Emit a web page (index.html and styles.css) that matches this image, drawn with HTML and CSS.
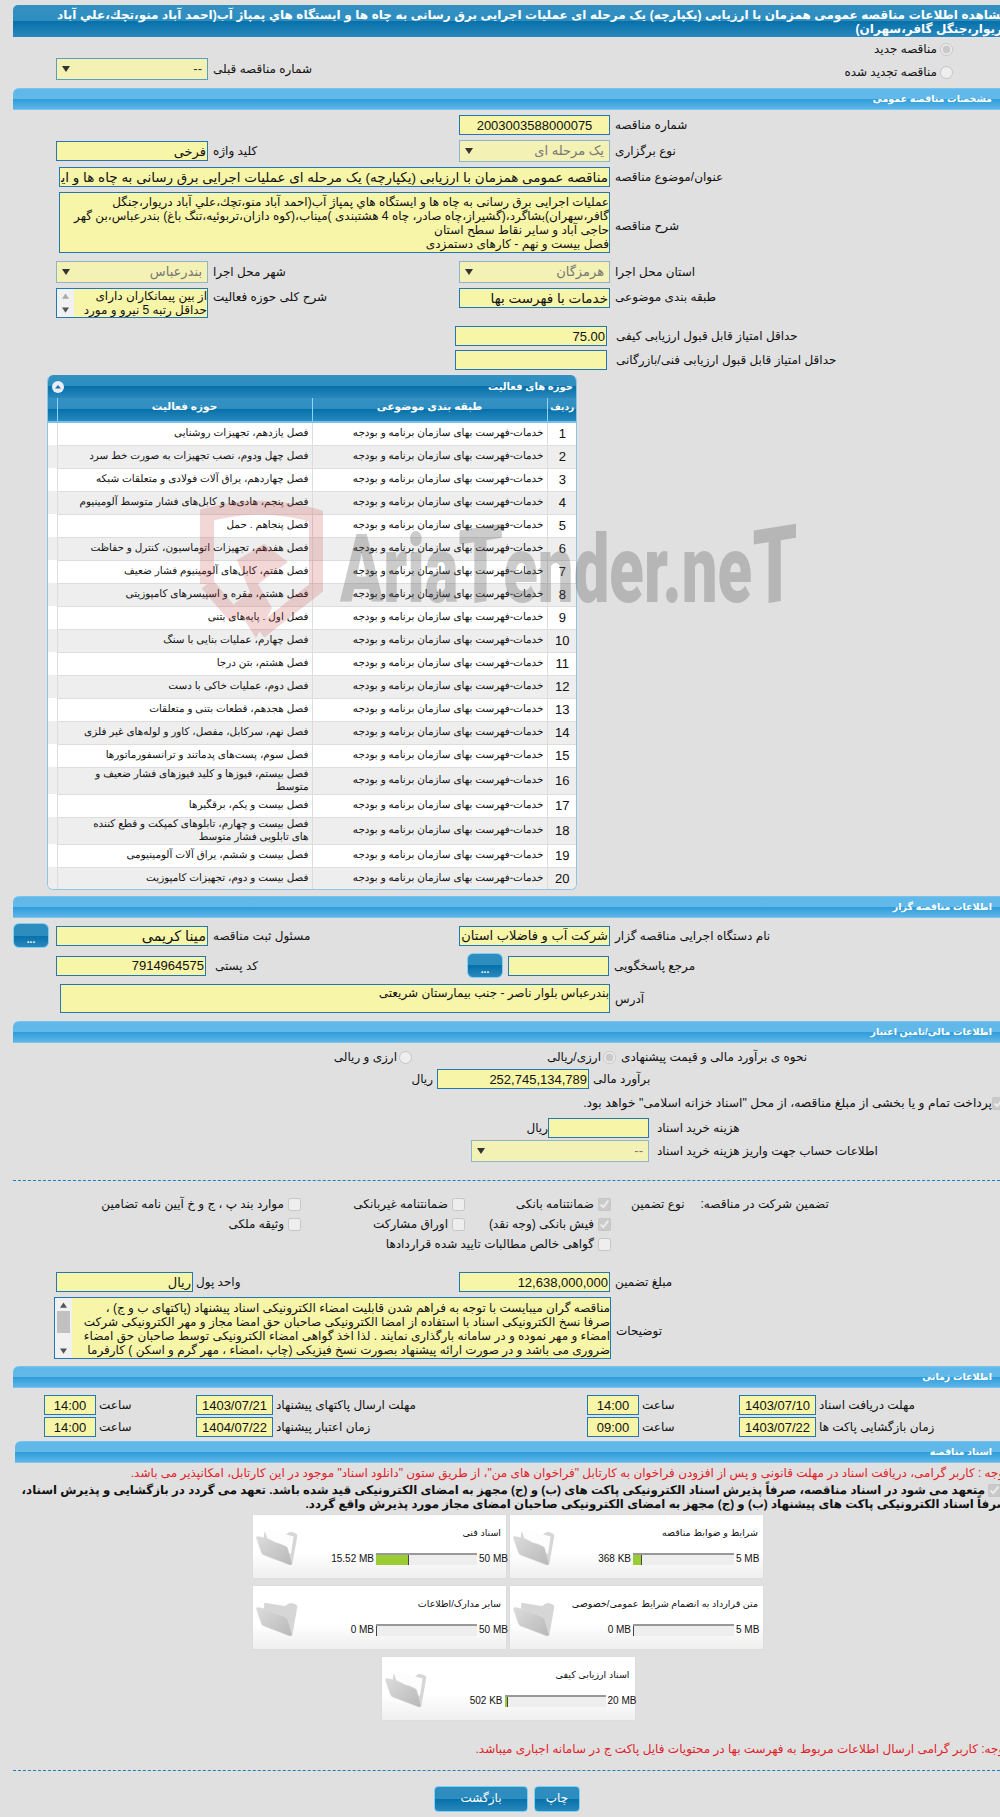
FILE: index.html
```html
<!DOCTYPE html>
<html lang="fa">
<head>
<meta charset="utf-8">
<title>مشاهده اطلاعات مناقصه</title>
<link rel="stylesheet" href="styles.css">
</head>
<body>
<div class="page">
  <h1 class="hdr"><span class="bleed">مشاهده اطلاعات مناقصه عمومی همزمان با ارزیابی (یکپارچه) یک مرحله ای عملیات اجرایی برق رسانی به چاه ها و ایستگاه هاي پمپاژ آب(احمد آباد منو،تچك،علي آباد</span><span class="bleed">دریوار،جنگل گافر،سهران)</span></h1>

  <div class="top-radios">
    <label class="rad-line"><input type="radio" disabled checked><span>مناقصه جدید</span></label>
    <div class="row-prev">
      <div class="cell"><div class="sel prev"><svg class="arr" viewBox="0 0 8 6"><path d="M0 0h8L4 6z"/></svg><span>--</span></div><span class="lbl">شماره مناقصه قبلی</span></div>
      <label class="rad-line rad-end"><input type="radio" disabled><span>مناقصه تجدید شده</span></label>
    </div>
  </div>

  <h2 class="sec">مشخصات مناقصه عمومی</h2>
  <div class="row r1"><div class="cell"></div><div class="cell"><input class="fld w151 ltr-c" readonly value="2003003588000075"><span class="lbl">شماره مناقصه</span></div></div>
  <div class="row r22"><div class="cell in43"><input class="fld big w152" readonly value="فرخی"><span class="lbl">کلید واژه</span></div><div class="cell"><div class="sel w151"><svg class="arr" viewBox="0 0 8 6"><path d="M0 0h8L4 6z"/></svg><span>یک مرحله ای</span></div><span class="lbl">نوع برگزاری</span></div></div>
  <div class="wide r3"><input class="fld xl w551" readonly value="مناقصه عمومی همزمان با ارزیابی (یکپارچه) یک مرحله ای عملیات اجرایی برق رسانی به چاه ها و ایستگاه هاي پمپاژ آب(احمد آباد منو،تچك،علي آباد دریوار،جنگل گافر،سهران)"><span class="lbl">عنوان/موضوع مناقصه</span></div>
  <div class="wide r4"><div class="ta w551 h61">عملیات اجرایی برق رسانی به چاه ها و ایستگاه هاي پمپاژ آب(احمد آباد منو،تچك،علي آباد دریوار،جنگل<br>گافر،سهران)بشاگرد،(گشیراز،چاه صادر، چاه 4 هشتبندی )میناب،(کوه دازان،تربوئیه،تنگ باغ) بندرعباس،بن گهر<br>حاجی آباد و سایر نقاط سطح استان<br>فصل بیست و نهم - کارهای دستمزدی</div><span class="lbl lbl-low">شرح مناقصه</span></div>
  <div class="row r22 r5"><div class="cell in43"><div class="sel w152"><svg class="arr" viewBox="0 0 8 6"><path d="M0 0h8L4 6z"/></svg><span>بندرعباس</span></div><span class="lbl">شهر محل اجرا</span></div><div class="cell"><div class="sel w151"><svg class="arr" viewBox="0 0 8 6"><path d="M0 0h8L4 6z"/></svg><span>هرمزگان</span></div><span class="lbl">استان محل اجرا</span></div></div>
  <div class="row r6"><div class="cell in43 top"><div class="list"><div class="sb sb-s"><svg viewBox="0 0 8 6"><path d="M4 0l4 6H0z"/></svg><svg viewBox="0 0 8 6"><path d="M0 0h8L4 6z"/></svg></div><div class="list-t">از بین پیمانکاران دارای<br>حداقل رتبه 5 نیرو و مورد</div></div><span class="lbl lbl-top">شرح کلی حوزه فعالیت</span></div><div class="cell top"><input class="fld xl w151" readonly value="خدمات با فهرست بها"><span class="lbl lbl-top">طبقه بندی موضوعی</span></div></div>
  <div class="score r7"><input class="fld w152 num" readonly value="75.00"><span class="lbl">حداقل امتیاز قابل قبول ارزیابی کیفی</span></div>
  <div class="score r8"><input class="fld w152" readonly value=""><span class="lbl">حداقل امتیاز قابل قبول ارزیابی فنی/بازرگانی</span></div>

  <section class="panel">
    <h3 class="panel-t"><span>حوزه های فعالیت</span><svg class="collapse" viewBox="0 0 12 12"><circle cx="6" cy="6" r="6" fill="#e8eef5"/><path d="M3 7.500L6 4l3 3.500z" fill="#1f6fa8"/></svg></h3>
    <table class="tbl">
      <thead><tr><th class="c-n">ردیف</th><th class="c-c">طبقه بندی موضوعی</th><th class="c-a">حوزه فعالیت</th><th class="c-e"></th></tr></thead>
      <tbody>
        <tr><td class="n">1</td><td>خدمات-فهرست بهای سازمان برنامه و بودجه</td><td>فصل یازدهم، تجهیزات روشنایی</td><td class="e"></td></tr>
        <tr><td class="n">2</td><td>خدمات-فهرست بهای سازمان برنامه و بودجه</td><td>فصل چهل ودوم، نصب تجهیزات به صورت خط سرد</td><td class="e"></td></tr>
        <tr><td class="n">3</td><td>خدمات-فهرست بهای سازمان برنامه و بودجه</td><td>فصل چهاردهم، یراق آلات فولادی و متعلقات شبکه</td><td class="e"></td></tr>
        <tr><td class="n">4</td><td>خدمات-فهرست بهای سازمان برنامه و بودجه</td><td>فصل پنجم، هادی‌ها و کابل‌های فشار متوسط آلومینیوم</td><td class="e"></td></tr>
        <tr><td class="n">5</td><td>خدمات-فهرست بهای سازمان برنامه و بودجه</td><td>فصل پنجاهم . حمل</td><td class="e"></td></tr>
        <tr><td class="n">6</td><td>خدمات-فهرست بهای سازمان برنامه و بودجه</td><td>فصل هفدهم، تجهیزات اتوماسیون، کنترل و حفاظت</td><td class="e"></td></tr>
        <tr><td class="n">7</td><td>خدمات-فهرست بهای سازمان برنامه و بودجه</td><td>فصل هفتم، کابل‌های آلومینیوم فشار ضعیف</td><td class="e"></td></tr>
        <tr><td class="n">8</td><td>خدمات-فهرست بهای سازمان برنامه و بودجه</td><td>فصل هشتم، مقره و اسپیسرهای کامپوزیتی</td><td class="e"></td></tr>
        <tr><td class="n">9</td><td>خدمات-فهرست بهای سازمان برنامه و بودجه</td><td>فصل اول . پایه‌های بتنی</td><td class="e"></td></tr>
        <tr><td class="n">10</td><td>خدمات-فهرست بهای سازمان برنامه و بودجه</td><td>فصل چهارم، عملیات بنایی با سنگ</td><td class="e"></td></tr>
        <tr><td class="n">11</td><td>خدمات-فهرست بهای سازمان برنامه و بودجه</td><td>فصل هشتم، بتن درجا</td><td class="e"></td></tr>
        <tr><td class="n">12</td><td>خدمات-فهرست بهای سازمان برنامه و بودجه</td><td>فصل دوم، عملیات خاکی با دست</td><td class="e"></td></tr>
        <tr><td class="n">13</td><td>خدمات-فهرست بهای سازمان برنامه و بودجه</td><td>فصل هجدهم، قطعات بتنی و متعلقات</td><td class="e"></td></tr>
        <tr><td class="n">14</td><td>خدمات-فهرست بهای سازمان برنامه و بودجه</td><td>فصل نهم، سرکابل، مفصل، کاور و لوله‌های غیر فلزی</td><td class="e"></td></tr>
        <tr><td class="n">15</td><td>خدمات-فهرست بهای سازمان برنامه و بودجه</td><td>فصل سوم، پست‌های پدماتند و ترانسفورماتورها</td><td class="e"></td></tr>
        <tr><td class="n">16</td><td>خدمات-فهرست بهای سازمان برنامه و بودجه</td><td class="two">فصل بیستم، فیوزها و کلید فیوزهای فشار ضعیف و<br>متوسط</td><td class="e"></td></tr>
        <tr><td class="n">17</td><td>خدمات-فهرست بهای سازمان برنامه و بودجه</td><td>فصل بیست و یکم، برقگیرها</td><td class="e"></td></tr>
        <tr><td class="n">18</td><td>خدمات-فهرست بهای سازمان برنامه و بودجه</td><td class="two">فصل بیست و چهارم، تابلوهای کمپکت و قطع کننده<br>های تابلویی فشار متوسط</td><td class="e"></td></tr>
        <tr><td class="n">19</td><td>خدمات-فهرست بهای سازمان برنامه و بودجه</td><td>فصل بیست و ششم، یراق آلات آلومینیومی</td><td class="e"></td></tr>
        <tr><td class="n">20</td><td>خدمات-فهرست بهای سازمان برنامه و بودجه</td><td>فصل بیست و دوم، تجهیزات کامپوزیت</td><td class="e"></td></tr>
      </tbody>
    </table>
  </section>

  <h2 class="sec s-org">اطلاعات مناقصه گزار</h2>
  <div class="row r-org"><div class="cell"><button class="btn-dots">...</button><input class="fld xxl w152" readonly value="مینا کریمی"><span class="lbl">مسئول ثبت مناقصه</span></div><div class="cell"><input class="fld big w151" readonly value="شرکت آب و فاضلاب استان"><span class="lbl">نام دستگاه اجرایی مناقصه گزار</span></div></div>
  <div class="row r-ref"><div class="cell in43 postal"><input class="fld w150 num" readonly value="7914964575"><span class="lbl">کد پستی</span></div><div class="cell ref"><button class="btn-dots">...</button><input class="fld w101" readonly value=""><span class="lbl">مرجع پاسخگویی</span></div></div>
  <div class="wide r-addr"><div class="ta w550 h29">بندرعباس بلوار ناصر - جنب بیمارستان شریعتی</div><span class="lbl">آدرس</span></div>

  <h2 class="sec s-fin">اطلاعات مالی/تامین اعتبار</h2>
  <div class="cur-row">
    <label class="cur cur-a"><span>ارزی و ریالی</span><input type="radio" disabled></label>
    <label class="cur cur-b"><span>ارزی/ریالی</span><input type="radio" disabled checked></label>
    <span class="lbl">نحوه ی برآورد مالی و قیمت پیشنهادی</span>
  </div>
  <div class="est-row"><span class="lbl unit">ریال</span><input class="fld w152 num" readonly value="252,745,134,789"><span class="lbl">برآورد مالی</span></div>
  <label class="treasury"><input type="checkbox" disabled checked><span>پرداخت تمام و یا بخشی از مبلغ مناقصه، از محل "اسناد خزانه اسلامی" خواهد بود.</span></label>
  <div class="buy-row"><span class="lbl unit">ریال</span><input class="fld w101" readonly value=""><span class="lbl">هزینه خرید اسناد</span></div>
  <div class="acc-row"><div class="sel w178"><svg class="arr" viewBox="0 0 8 6"><path d="M0 0h8L4 6z"/></svg><span>--</span></div><span class="lbl">اطلاعات حساب جهت واریز هزینه خرید اسناد</span></div>
  <div class="dash d1"></div>

  <div class="g-row g1">
    <label class="chk"><input type="checkbox" disabled><span>موارد بند پ ، ج و خ آیین نامه تضامین</span></label>
    <label class="chk"><input type="checkbox" disabled><span>ضمانتنامه غیربانکی</span></label>
    <label class="chk"><input type="checkbox" disabled checked><span>ضمانتنامه بانکی</span></label>
    <div class="g-lbl"><span class="lbl">نوع تضمین</span><span class="lbl">تضمین شرکت در مناقصه:</span></div>
  </div>
  <div class="g-row">
    <label class="chk"><input type="checkbox" disabled><span>وثیقه ملکی</span></label>
    <label class="chk"><input type="checkbox" disabled><span>اوراق مشارکت</span></label>
    <label class="chk"><input type="checkbox" disabled checked><span>فیش بانکی (وجه نقد)</span></label>
  </div>
  <div class="g-row">
    <span></span>
    <label class="chk chk-long"><input type="checkbox" disabled><span>گواهی خالص مطالبات تایید شده قراردادها</span></label>
  </div>

  <div class="row r-amt"><div class="cell in43"><input class="fld big w137" readonly value="ریال"><span class="lbl">واحد پول</span></div><div class="cell"><input class="fld w151 num" readonly value="12,638,000,000"><span class="lbl">مبلغ تضمین</span></div></div>
  <div class="wide r-notes">
    <div class="ta-s">
      <div class="sb"><svg viewBox="0 0 8 6"><path d="M4 0l4 6H0z"/></svg><i></i><svg viewBox="0 0 8 6"><path d="M0 0h8L4 6z"/></svg></div>
      <div class="ta-t">مناقصه گران میبایست با توجه به فراهم شدن قابلیت امضاء الکترونیکی اسناد پیشنهاد (پاکتهای ب و ج) ،<br>صرفا نسخ الکترونیکی اسناد با استفاده از امضا الکترونیکی صاحبان حق امضا مجاز و مهر الکترونیکی شرکت<br>امضاء و مهر نموده و در سامانه بارگذاری نمایند . لذا اخذ گواهی امضاء الکترونیکی توسط صاحبان حق امضاء<br>ضروری می باشد و در صورت ارائه پیشنهاد بصورت نسخ فیزیکی (چاپ ،امضاء ، مهر گرم و اسکن ) کارفرما</div>
    </div>
    <span class="lbl lbl-low">توضیحات</span>
  </div>

  <h2 class="sec s-time">اطلاعات زمانی</h2>
  <div class="t-grid">
    <div class="cell"><input class="fld w52 ctr" readonly value="14:00"><span class="lbl">ساعت</span></div>
    <div class="cell"><input class="fld w77 ctr" readonly value="1403/07/21"><span class="lbl">مهلت ارسال پاکتهای پیشنهاد</span></div>
    <div class="cell"><input class="fld w52 ctr" readonly value="14:00"><span class="lbl">ساعت</span></div>
    <div class="cell"><input class="fld w77 ctr" readonly value="1403/07/10"><span class="lbl">مهلت دریافت اسناد</span></div>
    <div class="cell"><input class="fld w52 ctr" readonly value="14:00"><span class="lbl">ساعت</span></div>
    <div class="cell"><input class="fld w77 ctr" readonly value="1404/07/22"><span class="lbl">زمان اعتبار پیشنهاد</span></div>
    <div class="cell"><input class="fld w52 ctr" readonly value="09:00"><span class="lbl">ساعت</span></div>
    <div class="cell"><input class="fld w77 ctr" readonly value="1403/07/22"><span class="lbl">زمان بازگشایی پاکت ها</span></div>
  </div>

  <h2 class="sec s-docs">اسناد مناقصه</h2>
  <p class="red bleed-p">توجه : کاربر گرامی، دریافت اسناد در مهلت قانونی و پس از افزودن فراخوان به کارتابل "فراخوان های من"، از طریق ستون "دانلود اسناد" موجود در این کارتابل، امکانپذیر می باشد.</p>
  <div class="pledge"><input type="checkbox" disabled checked><p>متعهد می شود در اسناد مناقصه، صرفاً پذیرش اسناد الکترونیکی پاکت های (ب) و (ج) مجهز به امضای الکترونیکی قید شده باشد. تعهد می گردد در بازگشایی و پذیرش اسناد،</p></div>
  <p class="pledge2 bleed-p">صرفاً اسناد الکترونیکی پاکت های پیشنهاد (ب) و (ج) مجهز به امضای الکترونیکی صاحبان امضای مجاز مورد پذیرش واقع گردد.</p>

  <div class="cards">
    <article class="card"><svg class="folder" viewBox="0 0 125 110"><defs><linearGradient id="ff" x1="0" y1="0" x2="1" y2="1"><stop offset="0" stop-color="#dcdcdc"/><stop offset="1" stop-color="#b8b8b8"/></linearGradient></defs><path class="f-b" d="M25 8L85 18Q92 16 96 11Q106 6 120 14Q125 18 122 26L108 104Q104 109 98 105L20 70Z"/><path class="f-p" d="M26 6Q33 0 42 3L112 22L104 74L35 32Z"/><path class="f-f" d="M1 27Q0 21 8 22Q35 25 58 40Q88 48 94 56L107 102Q107 110 98 106L22 77Q17 75 15 68Z"/></svg><div class="c-body"><div class="c-title">شرایط و ضوابط مناقصه</div><div class="c-bar"><span class="c-used">368 KB</span><div class="bar"><i class="p7"></i></div><span class="c-max">5 MB</span></div></div></article>
    <article class="card"><svg class="folder" viewBox="0 0 125 110"><path class="f-b" d="M25 8L85 18Q92 16 96 11Q106 6 120 14Q125 18 122 26L108 104Q104 109 98 105L20 70Z"/><path class="f-p" d="M26 6Q33 0 42 3L112 22L104 74L35 32Z"/><path class="f-f" d="M1 27Q0 21 8 22Q35 25 58 40Q88 48 94 56L107 102Q107 110 98 106L22 77Q17 75 15 68Z"/></svg><div class="c-body"><div class="c-title">اسناد فنی</div><div class="c-bar"><span class="c-used">15.52 MB</span><div class="bar"><i class="p33"></i></div><span class="c-max">50 MB</span></div></div></article>
    <article class="card"><svg class="folder" viewBox="0 0 125 110"><path class="f-b" d="M25 8L85 18Q92 16 96 11Q106 6 120 14Q125 18 122 26L108 104Q104 109 98 105L20 70Z"/><path class="f-f" d="M1 27Q0 21 8 22Q35 25 58 40Q88 48 94 56L107 102Q107 110 98 106L22 77Q17 75 15 68Z"/></svg><div class="c-body"><div class="c-title">متن قرارداد به انضمام شرایط عمومی/خصوصی</div><div class="c-bar"><span class="c-used">0 MB</span><div class="bar"><i class="p0"></i></div><span class="c-max">5 MB</span></div></div></article>
    <article class="card"><svg class="folder" viewBox="0 0 125 110"><path class="f-b" d="M25 8L85 18Q92 16 96 11Q106 6 120 14Q125 18 122 26L108 104Q104 109 98 105L20 70Z"/><path class="f-f" d="M1 27Q0 21 8 22Q35 25 58 40Q88 48 94 56L107 102Q107 110 98 106L22 77Q17 75 15 68Z"/></svg><div class="c-body"><div class="c-title">سایر مدارک/اطلاعات</div><div class="c-bar"><span class="c-used">0 MB</span><div class="bar"><i class="p0"></i></div><span class="c-max">50 MB</span></div></div></article>
    <article class="card"><svg class="folder" viewBox="0 0 125 110"><path class="f-b" d="M25 8L85 18Q92 16 96 11Q106 6 120 14Q125 18 122 26L108 104Q104 109 98 105L20 70Z"/><path class="f-p" d="M26 6Q33 0 42 3L112 22L104 74L35 32Z"/><path class="f-f" d="M1 27Q0 21 8 22Q35 25 58 40Q88 48 94 56L107 102Q107 110 98 106L22 77Q17 75 15 68Z"/></svg><div class="c-body"><div class="c-title">اسناد ارزیابی کیفی</div><div class="c-bar"><span class="c-used">502 KB</span><div class="bar"><i class="p3"></i></div><span class="c-max">20 MB</span></div></div></article>
  </div>

  <p class="red note bleed-p">توجه: کاربر گرامی ارسال اطلاعات مربوط به فهرست بها در محتویات فایل پاکت ج در سامانه اجباری میباشد.</p>
  <div class="dash d2"></div>
  <div class="actions"><button class="btn b-back">بازگشت</button><button class="btn b-print">چاپ</button></div>
</div>

<div class="wm" aria-hidden="true">
  <svg class="wm-shield" viewBox="0 0 124 140"><path d="M7 84V15Q62 0 116 16V88L60 132" fill="none" stroke="#c83c3c" stroke-width="14"/><path d="M7 84L36 118" fill="none" stroke="#c83c3c" stroke-width="14"/><path d="M37 60L64 44L88 62L58 84L72 108L56 138L34 104L50 92Z" fill="#c83c3c"/></svg>
  <span class="wm-text">Aria<b>T</b>ender.ne<b>T</b></span>
</div>
</body>
</html>
```
FILE: styles.css
```css
* { box-sizing: border-box; }
html, body { margin: 0; padding: 0; height: 1817px; overflow: hidden; }
body { background: #e0e0e0; color: #111; font: 12px/14px "Liberation Sans", "DejaVu Sans", sans-serif; position: relative; }
p, h1, h2, h3 { margin: 0; }
.page { margin-left: 13px; width: 987px; padding-top: 5px; }

.hdr { height: 32px; padding: 3px 0 0; color: #fff; font-size: 12px; line-height: 14px; font-weight: bold; word-spacing: .25px; border-radius: 5px 0 0 0; direction: rtl; overflow: hidden; background: linear-gradient(#3391c2 0, #2e8dbf 50%, #0670aa 50%, #2a88bd 100%); }
.bleed { display: block; margin-right: -8px; white-space: nowrap; }

.top-radios { height: 51px; padding-top: 5px; }
.rad-line { display: flex; direction: rtl; align-items: center; gap: 3px; height: 14px; margin-right: 47px; }
input[type=radio], input[type=checkbox] { margin: 0; width: 13px; height: 13px; flex: none; }
.row-prev { margin-top: 2px; height: 22px; display: flex; justify-content: space-between; padding-left: 43px; }
.rad-end { margin-top: 7px; }

.sec { height: 22px; padding: 4px 8px 0 0; color: #fff; font-size: 9.500px; line-height: 14px; font-weight: bold; direction: rtl; border-radius: 6px 0 0 0; background: linear-gradient(#7cc8f0 0, #5fb8e9 8%, #62b9e9 50%, #2e9cd9 50%, #5db6e8 95%, #8fd3f5 100%); }

.row { display: grid; grid-template-columns: 446px 1fr; }
.cell { display: flex; align-items: center; gap: 5px; }
.in43 { padding-left: 43px; }
.top { align-items: flex-start; }
.lbl { white-space: nowrap; direction: rtl; font-size: 12px; }
.lbl-low { margin-top: 6px; }
.fld { display: block; height: 20px; padding: 0 1px; border: 1px solid #2277b4; background: #f7f5a8; color: #111; font: 12px/18px "Liberation Sans", "DejaVu Sans", sans-serif; direction: rtl; text-align: right; outline: none; flex: none; border-radius: 0; }
.big { font-size: 13px; }
.xl { font-size: 13.500px; }
.xxl { font-size: 14.500px; }
.num { font-size: 13px; }
.ltr-c { text-align: center; font-size: 13px; }
.ctr { text-align: center; font-size: 13px; }
.sel { display: flex; justify-content: space-between; align-items: center; height: 22px; padding: 0 5px; border: 1px solid #8fb6c8; background: #f3f1b4; color: #777; direction: ltr; flex: none; font-size: 13px; }
.sel span { direction: rtl; }
.arr { width: 8px; height: 6px; fill: #333; }
.prev { width: 152px; color: #333; border-color: #5e9cc0; }
.w52 { width: 52px; } .w77 { width: 77px; } .w101 { width: 101px; } .w137 { width: 137px; } .w150 { width: 150px; } .w151 { width: 151px; } .w152 { width: 152px; } .w178 { width: 178px; } .w550 { width: 550px; } .w551 { width: 551px; }

.r1 { margin-top: 5px; height: 20px; }
.r22 { margin-top: 5px; height: 22px; }
.wide { display: flex; gap: 5px; align-items: center; }
.r3 { margin: 5px 0 0 46px; height: 20px; }
.r4 { margin: 5px 0 0 46px; height: 61px; }
.ta { padding: 2px 0 0 1px; border: 1px solid #2277b4; background: #f7f5a8; font-size: 12px; line-height: 14px; direction: rtl; flex: none; overflow: hidden; white-space: nowrap; }
.h61 { height: 61px; }
.h29 { height: 29px; padding-top: 1px; }
.r5 { margin-top: 8px; }
.r6 { margin-top: 5px; height: 30px; }
.lbl-top { margin-top: 2px; }
.list { display: flex; width: 152px; height: 30px; flex: none; border: 1px solid #2277b4; background: #f7f5a8; overflow: hidden; }
.list-t { flex: 1; direction: rtl; white-space: nowrap; overflow: hidden; padding-top: 1px; font-size: 12px; line-height: 13.500px; }
.sb { display: flex; flex-direction: column; justify-content: space-between; align-items: center; width: 17px; flex: none; background: #f1f1f1; padding: 4px 0; }
.sb svg { width: 7px; height: 6px; fill: #555; }
.sb-s svg:first-child { fill: #aaa; }
.sb i { display: block; width: 13px; height: 22px; background: #c1c1c1; margin: 3px 0 auto; }
.score { display: flex; gap: 9px; align-items: center; height: 20px; margin-left: 442px; }
.r7 { margin-top: 8px; }
.r8 { margin-top: 4px; }

.panel { margin: 5px 0 0 34px; width: 530px; height: 515px; border: solid #8fc6e6; border-width: 0 1px 1px; border-radius: 6px; background: #fff; overflow: hidden; direction: rtl; }
.panel-t { display: flex; justify-content: space-between; align-items: center; height: 23px; padding: 0 3px 0 4px; color: #fff; font-size: 10px; font-weight: bold; background: linear-gradient(#3391c2 0, #2e8dbf 50%, #0670aa 50%, #2a88bd 100%); }
.collapse { width: 12px; height: 12px; }
.tbl { width: 530px; border-collapse: collapse; table-layout: fixed; font-size: 10.400px; line-height: 13px; margin-right: -1px; text-rendering: geometricPrecision; }
.tbl th { height: 24px; padding: 0 0 4px; color: #fff; font-size: 10.500px; font-weight: bold; border-left: 1px solid #8fd3f5; border-bottom: 2px solid #73c4ee; background: linear-gradient(#3391c2 0, #2e8dbf 50%, #0670aa 50%, #2a88bd 100%); white-space: nowrap; }
.tbl th.c-n { font-size: 9px; }
.c-n { width: 30px; } .c-c { width: 235px; } .c-a { width: 255px; } .c-e { width: 10px; }
.tbl td { height: 23px; padding: 0 3px; border-bottom: 1px solid #ddd; border-left: 1px solid #ddd; white-space: nowrap; overflow: hidden; }
.tbl tr:nth-child(even) td { background: #eee; }
.tbl td.e { background: #fff; padding: 0; border: 0; }
.tbl td.n { text-align: center; font-size: 13px; }
.tbl td.two { height: 27px; }

.s-org { margin-top: 6px; }
.r-org { margin-top: 5px; height: 25px; }
.btn-dots { width: 36px; height: 25px; padding: 8px 0 0; border: 1px solid #7fd0f5; border-radius: 6px; color: #fff; font: bold 10px/14px "Liberation Sans", sans-serif; background: linear-gradient(#2e8dbf 0, #2e8dbf 50%, #0670aa 50%, #2a88bd 100%); flex: none; }
.r-org .btn-dots { margin-right: 2px; }
.r-ref { margin-top: 5px; height: 25px; }
.postal .lbl { margin-left: 4px; }
.ref { padding-left: 8px; }
.r-addr { margin: 6px 0 0 47px; height: 29px; }

.s-fin { margin-top: 8px; }
.cur-row { display: flex; height: 20px; margin-top: 4px; align-items: center; padding-left: 324px; }
.cur { display: flex; align-items: center; gap: 2px; direction: ltr; justify-content: flex-end; white-space: nowrap; }
.cur-a { width: 75px; }
.cur-b { width: 204px; }
.cur-row > .lbl { margin-left: 5px; }
.est-row { display: flex; align-items: center; height: 20px; margin-top: 2px; padding-left: 402px; gap: 4px; }
.unit { width: 18px; }
.treasury { display: flex; direction: rtl; align-items: center; height: 16px; margin: 6px -2px 0 0; gap: 0; font-size: 12.300px; }
.treasury input { margin-right: -3px; }
.buy-row { display: flex; align-items: center; height: 20px; margin-top: 7px; padding-left: 515px; }
.buy-row .fld { margin-right: 8px; }
.buy-row .unit { width: 20px; }
.acc-row { display: flex; align-items: center; gap: 8px; height: 22px; margin-top: 2px; padding-left: 458px; }
.dash { height: 0; border-top: 1px dashed #1f80b8; }
.d1 { margin-top: 18px; }

.g-row { display: grid; grid-template-columns: 288px 164px 146px 1fr; height: 20px; }
.g1 { margin-top: 13px; }
.chk { display: flex; direction: rtl; align-items: center; gap: 4px; white-space: nowrap; }
.chk-long { grid-column: 2 / 4; }
.g-lbl { display: flex; direction: ltr; gap: 16px; padding-left: 20px; align-items: center; }

.r-amt { margin-top: 18px; height: 20px; }
.r-amt .in43 { gap: 3px; }
.r-notes { margin: 5px 0 0 41px; height: 62px; }
.ta-s { display: flex; width: 557px; height: 62px; flex: none; border: 1px solid #2277b4; background: #f7f5a8; overflow: hidden; }
.ta-t { flex: 1; direction: rtl; padding-top: 3px; white-space: nowrap; overflow: hidden; }

.s-time { margin-top: 7px; }
.t-grid { display: grid; grid-template-columns: 152px 391px 152px 1fr; grid-auto-rows: 20px; row-gap: 2px; padding-left: 31px; margin-top: 7px; }
.t-grid .cell { gap: 3px; }

.s-docs { margin: 4px 0 0 2px; }
.red { color: #e0222a; direction: rtl; white-space: nowrap; font-size: 12px; }
.bleed-p { margin-right: -8px; }
.s-docs + .red { margin-top: 3px; }
.pledge { display: flex; direction: rtl; align-items: center; gap: 3px; height: 14px; margin: 3px -1px 0 0; font-weight: bold; white-space: nowrap; font-size: 11.800px; text-rendering: geometricPrecision; }
.pledge2 { direction: rtl; font-weight: bold; white-space: nowrap; font-size: 11.800px; text-rendering: geometricPrecision; }

.cards { display: flex; flex-wrap: wrap; justify-content: center; gap: 8px 4px; width: 510px; margin: 4px 0 0 240px; direction: rtl; }
.card { display: flex; direction: ltr; width: 253px; height: 63px; background: linear-gradient(#fff 0, #fff 60%, #efefef 100%); box-shadow: 0 0 1px #ccc; }
.folder { width: 42px; height: 37px; margin: 14px 0 0 3px; flex: none; }
.f-b { fill: #d6d6d6; } .f-p { fill: #fdfdfd; } .f-f { fill: url(#ff); stroke: #e2e2e2; stroke-width: 1; }
.c-body { flex: 1; min-width: 0; padding: 11px 0 0; }
.c-title { height: 26px; padding-right: 5px; direction: rtl; font-size: 9.500px; white-space: nowrap; }
.c-bar { display: flex; align-items: center; justify-content: flex-end; gap: 2px; font-size: 10px; white-space: nowrap; }
.c-max { width: 27px; }
.bar { width: 101px; height: 12px; background: #eee; border-top: 2px solid #999; }
.bar i { display: block; height: 10px; background: #9acd32; border-right: 1px solid #444; }
.p7 { width: 9px; } .p33 { width: 33px; } .p0 { width: 1px; } .p3 { width: 3px; }

.note { margin-top: 22px; height: 14px; }
.d2 { margin-top: 14px; }
.actions { display: flex; justify-content: flex-start; gap: 6px; margin: 15px 0 0 421px; }
.btn { height: 26px; padding: 0 0 2px; border: 1px solid #7fd0f5; border-radius: 4px; color: #fff; font: 12px/14px "Liberation Sans", "DejaVu Sans", sans-serif; background: linear-gradient(#2e8dbf 0, #2e8dbf 50%, #0670aa 50%, #2a88bd 100%); }
.b-back { width: 94px; }
.b-print { width: 46px; }

.wm { position: absolute; left: 200px; top: 500px; width: 620px; height: 140px; pointer-events: none; }
.wm-shield { position: absolute; left: 0; top: 0; width: 124px; height: 140px; opacity: .2; }
.wm-text { position: absolute; left: 140px; top: 14px; color: rgba(85, 85, 85, .3); font: 900 94px/102px Roboto, sans-serif; white-space: nowrap; transform: scaleX(.675); transform-origin: 0 50%; }
.wm-text b { display: inline-block; font-weight: 900; transform: skewY(-6deg); font-size: 1.12em; line-height: 1; }
```
